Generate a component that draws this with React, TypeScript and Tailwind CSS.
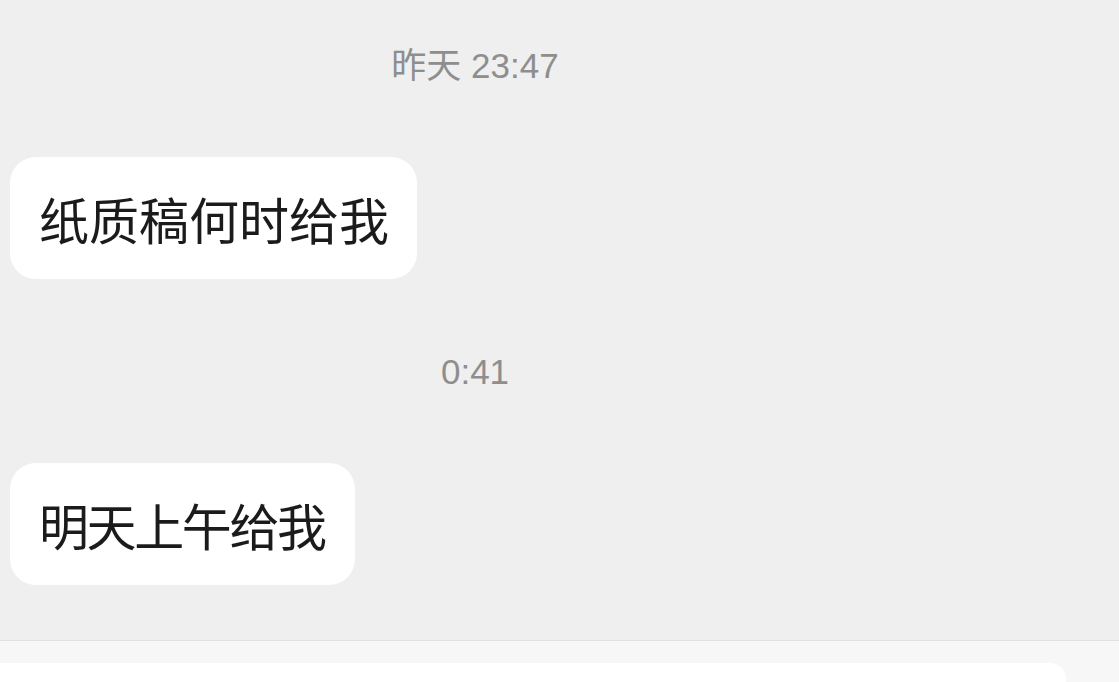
export default function App() {
  const font = { fontFamily: '"Noto Sans CJK SC", "Noto Sans", sans-serif' };
  const tsFont = { fontFamily: '"Liberation Sans", "Noto Sans CJK SC", sans-serif' };
  return (
    <div className="w-[1119px] h-[682px] bg-[#efefef] flex flex-col overflow-hidden" style={font}>
      <div className="h-[640px] flex flex-col items-start shrink-0">
        <div className="w-[950px] mt-[46px] h-[40px] leading-[40px] text-center text-[35px] text-[#8e8e8e]" style={tsFont}>昨天 23:47</div>
        <div className="mt-[71px] ml-[10px] w-[407px] h-[122px] pl-[29px] flex items-center bg-white rounded-[26px] text-[50px] leading-none text-[#1b1b1b]">纸质稿何时给我</div>
        <div className="w-[950px] mt-[73px] h-[40px] leading-[40px] text-center text-[35px] text-[#8e8e8e]" style={tsFont}>0:41</div>
        <div className="mt-[71px] ml-[10px] w-[345px] h-[122px] pl-[29px] flex items-center bg-white rounded-[26px] text-[50px] leading-none tracking-[-2.4px] text-[#1b1b1b]">明天上午给我</div>
      </div>
      <div className="h-px bg-[#e2e2e2] shrink-0" />
      <div className="flex-1 bg-[#f7f7f7] pt-[22px]">
        <div className="w-[1066px] h-[40px] bg-white rounded-tr-[16px]" />
      </div>
    </div>
  );
}
